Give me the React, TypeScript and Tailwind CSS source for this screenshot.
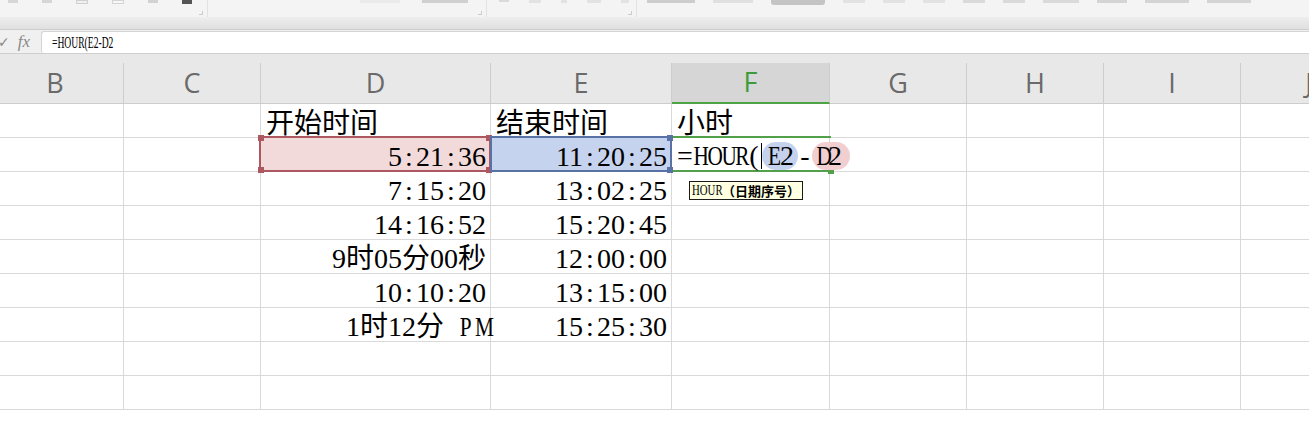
import React from 'react';

type Col = { id: string; w: string };

const cols: Col[] = [
  { id: 'B', w: 'w-[137px]' },
  { id: 'C', w: 'w-[137px]' },
  { id: 'D', w: 'w-[230px]' },
  { id: 'E', w: 'w-[181px]' },
  { id: 'F', w: 'w-[158px]' },
  { id: 'G', w: 'w-[137px]' },
  { id: 'H', w: 'w-[137px]' },
  { id: 'I', w: 'w-[137px]' },
  { id: 'J', w: 'w-[137px]' },
];

const rows: Record<string, string>[] = [
  { D: '开始时间', E: '结束时间', F: '小时' },
  { D: '5:21:36', E: '11:20:25' },
  { D: '7:15:20', E: '13:02:25' },
  { D: '14:16:52', E: '15:20:45' },
  { D: '9时05分00秒', E: '12:00:00' },
  { D: '10:10:20', E: '13:15:00' },
  { D: '1时12分 PM', E: '15:25:30' },
  {},
  {},
];

const cellFont = { fontFamily: '"Liberation Serif", "Noto Sans CJK SC", serif' };

function Song({ s }: { s: string }) {
  return (
    <>
      {s.split('').map((ch, i) => {
        if (/[\u4e00-\u9fff]/.test(ch)) return <span key={i}>{ch}</span>;
        if (/[0-9]/.test(ch)) return <span key={i}>{ch}</span>;
        if (/[A-Z]/.test(ch))
          return (
            <span key={i} className="inline-block w-[14px] text-center">
              <span className="inline-block scale-x-[0.76]">{ch}</span>
            </span>
          );
        return (
          <span key={i} className="inline-block w-[14px] text-center">
            {ch === ' ' ? '\u00a0' : ch}
          </span>
        );
      })}
    </>
  );
}

function Handle({ pos, color }: { pos: string; color: string }) {
  return <span className={`absolute h-[6px] w-[6px] ${pos} ${color}`} />;
}

function Toolbar() {
  return (
    <div className="flex h-[17px] items-start bg-[#f4f4f4]">
      <div className="relative flex h-full w-[208px] items-start gap-[24px] border-r border-[#e2e2e2] pl-[8px]">
        <span className="h-[3px] w-[10px] bg-[#d6d6d6]" />
        <span className="h-[3px] w-[10px] bg-[#d6d6d6]" />
        <span className="h-[4px] w-[12px] border border-[#d0d0d0] bg-[#efefef]" />
        <span className="h-[4px] w-[12px] border border-[#d4d4d4] bg-[#f7f7f7]" />
        <span className="h-[3px] w-[10px] bg-[#d2d2d2]" />
        <span className="h-[4px] w-[10px] bg-[#555]" />
        <span className="absolute bottom-[2px] right-[4px] h-[4px] w-[4px] border-b border-r border-[#cccccc]" />
      </div>
      <div className="relative flex h-full w-[279px] items-start justify-end gap-[22px] border-r border-[#e2e2e2] pr-[18px]">
        <span className="h-[3px] w-[40px] bg-[#ebebeb]" />
        <span className="h-[3px] w-[46px] bg-[#d0d0d0]" />
        <span className="absolute bottom-[2px] right-[4px] h-[4px] w-[4px] border-b border-r border-[#cccccc]" />
      </div>
      <div className="relative flex h-full w-[150px] items-start gap-[20px] border-r border-[#e2e2e2] pl-[12px]">
        <span className="h-[2px] w-[10px] bg-[#dadada]" />
        <span className="h-[3px] w-[12px] bg-[#e2e2e2]" />
        <span className="h-[3px] w-[6px] bg-[#e2e2e2]" />
        <span className="h-[3px] w-[14px] bg-[#e2e2e2]" />
        <span className="h-[3px] w-[8px] bg-[#e2e2e2]" />
        <span className="absolute bottom-[2px] right-[4px] h-[4px] w-[4px] border-b border-r border-[#cccccc]" />
      </div>
      <div className="flex h-full flex-1 items-start gap-[18px] pl-[10px]">
        <span className="h-[3px] w-[48px] bg-[#cdcdcd]" />
        <span className="h-[3px] w-[40px] bg-[#e0e0e0]" />
        <span className="h-[5px] w-[54px] rounded-b-[3px] bg-[#c4c4c4]" />
        <span className="h-[3px] w-[22px] bg-[#e2e2e2]" />
        <span className="h-[3px] w-[22px] bg-[#e2e2e2]" />
        <span className="h-[3px] w-[22px] bg-[#e2e2e2]" />
        <span className="h-[3px] w-[22px] bg-[#dadada]" />
        <span className="h-[3px] w-[22px] bg-[#dadada]" />
        <span className="h-[3px] w-[36px] bg-[#dadada]" />
        <span className="h-[3px] w-[30px] bg-[#d4d4d4]" />
        <span className="h-[3px] w-[44px] bg-[#d4d4d4]" />
        <span className="h-[3px] w-[44px] bg-[#d4d4d4]" />
      </div>
    </div>
  );
}

function FormulaBar() {
  return (
    <>
      <div className="h-[13px] border-b border-[#cccccc] bg-gradient-to-b from-[#eeeeee] to-[#e0e0e0]" />
      <div className="flex h-[23px] items-stretch bg-[#f0f0f0]">
        <div className="flex w-[41px] items-center gap-[8px] text-[#8a8a8a]">
          <span className="-ml-[2px] text-[14px] leading-none" style={{ fontFamily: '"DejaVu Sans", sans-serif' }}>
            ✓
          </span>
          <span className="text-[17px] italic leading-none" style={{ fontFamily: '"Liberation Serif", serif' }}>
            fx
          </span>
        </div>
        <div className="mt-[1px] flex flex-1 items-center rounded-l-[3px] border-l border-t border-[#d4d4d4] bg-white pl-[10px]">
          <span
            className="inline-block origin-left scale-x-[0.6] whitespace-nowrap text-[16px] text-black"
            style={{ fontFamily: '"Liberation Serif", serif' }}
          >
            =HOUR(E2-D2
          </span>
        </div>
      </div>
      <div className="h-[10px] border-t border-[#cfcfcf] bg-[#e8e8e8]" />
    </>
  );
}

function ColumnHeader() {
  return (
    <div className="-ml-[13px] flex h-[41px] bg-[#e8e8e8]">
      {cols.map((c) => (
        <div
          key={c.id}
          className={`${c.w} flex shrink-0 items-center justify-center border-b border-r border-[#cdcdcd] text-[27px] ${
            c.id === 'F' ? 'border-b-2 border-b-[#4fa246] bg-[#d6d6d6] text-[#3f9a3c]' : 'text-[#6a6a6a]'
          }`}
          style={{ fontFamily: '"Open Sans", "Liberation Sans", sans-serif' }}
        >
          {c.id}
        </div>
      ))}
    </div>
  );
}

function Editor() {
  return (
    <div className="absolute left-0 top-0 z-20 flex h-[34px] items-center whitespace-nowrap pl-[5px] pt-[2px] text-[28px] text-black">
      <Song s="=HOUR(" />
      <span className="h-[26px] w-[1px] bg-black" />
      <span className="flex h-[28px] items-center rounded-full bg-[#c5d2ee] px-[4px]">
        <Song s="E2" />
      </span>
      <Song s="-" />
      <span className="flex h-[28px] items-center rounded-full bg-[#f1cfd0] pl-[2px] pr-[8px]">
        <Song s="D2" />
      </span>
    </div>
  );
}

function Cell({ col, row }: { col: Col; row: number }) {
  const text = rows[row][col.id];
  const isHead = row === 0;
  const isD2 = row === 1 && col.id === 'D';
  const isE2 = row === 1 && col.id === 'E';
  const isF2 = row === 1 && col.id === 'F';

  let bg = '';
  if (isD2) bg = 'bg-[#f2dadb]';
  if (isE2) bg = 'bg-[#c6d3ef]';

  return (
    <div
      className={`${col.w} relative flex h-[34px] shrink-0 items-center border-b border-r border-[#d9d9d9] ${bg} ${
        isHead ? 'justify-start pl-[5px]' : 'justify-end pr-[4px]'
      } ${isF2 ? 'overflow-visible' : ''}`}
    >
      {text && (
        <span className={`whitespace-nowrap text-[28px] leading-[31px] text-black ${isHead ? 'pt-[5px]' : 'pt-[3px]'}`}>
          <Song s={text} />
        </span>
      )}
      {isD2 && (
        <span className="pointer-events-none absolute -left-[2px] -top-[2px] bottom-[-1px] right-[-1px] z-10 border-2 border-[#ad5860]">
          <Handle pos="-left-[3px] -top-[3px]" color="bg-[#ad5860]" />
          <Handle pos="-right-[3px] -top-[3px]" color="bg-[#ad5860]" />
          <Handle pos="-left-[3px] -bottom-[3px]" color="bg-[#ad5860]" />
          <Handle pos="-right-[3px] -bottom-[3px]" color="bg-[#ad5860]" />
        </span>
      )}
      {isE2 && (
        <span className="pointer-events-none absolute -left-[1px] -top-[2px] bottom-[-1px] right-[-1px] z-10 border-2 border-[#5872a6]">
          <Handle pos="-right-[3px] -top-[3px]" color="bg-[#5872a6]" />
          <Handle pos="-right-[3px] -bottom-[3px]" color="bg-[#5872a6]" />
        </span>
      )}
      {isF2 && (
        <>
          <span className="pointer-events-none absolute -top-[2px] bottom-[-1px] left-[1px] right-[-2px] z-10 border-y-2 border-[#53a04a]">
            <Handle pos="-right-[3px] -bottom-[4px]" color="bg-[#53a04a]" />
          </span>
          <Editor />
          <div
            className="absolute left-[17px] top-[43px] z-30 flex h-[19px] items-center whitespace-nowrap border border-[#1a1a1a] bg-[#ffffe1] px-[2px] text-[13px] leading-none text-black"
            style={{ fontFamily: '"Liberation Serif", "Noto Sans CJK SC", serif' }}
          >
            <span className="inline-block w-[30px] origin-left scale-x-[0.72] text-[15px]">HOUR</span>
            <span className="font-bold" style={{ fontFamily: '"Noto Sans CJK SC", sans-serif' }}>
              （日期序号）
            </span>
          </div>
        </>
      )}
    </div>
  );
}

export default function App() {
  return (
    <div className="relative h-[428px] w-[1309px] overflow-hidden bg-white">
      <Toolbar />
      <FormulaBar />
      <ColumnHeader />
      <div className="-ml-[13px]" style={cellFont}>
        {rows.map((_, r) => (
          <div key={r} className="flex">
            {cols.map((c) => (
              <Cell key={c.id} col={c} row={r} />
            ))}
          </div>
        ))}
      </div>
    </div>
  );
}
